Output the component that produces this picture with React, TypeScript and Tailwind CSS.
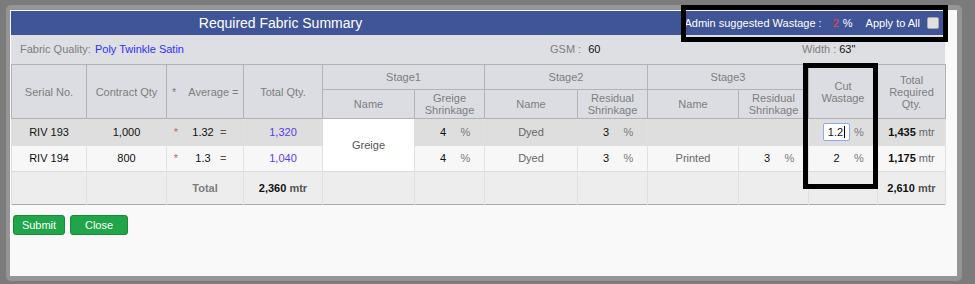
import React from "react";

const th = "border border-[#b3b3b3] bg-[#dcdde2] text-[#7d7d7d] font-normal text-center align-middle leading-[12px] p-0";
const td = "border-x border-[#e0e0e0] text-center align-middle p-0";

type pctProps = {
  value: string;
  focus?: boolean;
};
function Pct({ value, focus }: pctProps) {
  return (
    <div className="flex items-center justify-center gap-[4px]">
      {focus ? (
        <span className="w-[27px] h-[18px] flex items-center justify-center border border-[#8eaaf0] rounded-[2px] bg-white text-[#111]">
          1.2<span className="w-px h-[12px] bg-black ml-px" />
        </span>
      ) : (
        <span className="w-[27px] text-center text-[#111]">{value}</span>
      )}
      <span className="w-[9px] text-[#7a7a7a]">%</span>
    </div>
  );
}

function Avg({ value }: { value: string }) {
  return (
    <div className="flex items-center pl-[6px]">
      <span className="w-[6px] text-[#b86a6a]">*</span>
      <span className="ml-[10px] w-[28px] text-center text-[#111]">{value}</span>
      <span className="ml-[3px] text-[#555]">=</span>
    </div>
  );
}

function Qty({ value, total }: { value: string; total?: boolean }) {
  return (
    <span>
      <b className="text-[#111]">{value}</b>{" "}
      <span className={total ? "font-bold text-[#555]" : "text-[#666]"}>mtr</span>
    </span>
  );
}

export default function App() {
  return (
    <div className="relative w-[975px] h-[284px] overflow-hidden bg-[#7b7b7b] pt-[5px] pl-[6px] font-['Liberation_Sans',Arial,sans-serif] text-[11px]">
      <div className="w-[956px] h-[276px] rounded-[5px] bg-[#959595] pl-[4px] pr-[5px] py-[5px]">
        <div className="h-full bg-[#f9f9f9] pl-px pt-px pr-[12px]">
          {/* title bar */}
          <div className="flex items-center h-[24px] bg-[#3f5597] text-white">
            <div className="w-[539px] text-center text-[14px]">Required Fabric Summary</div>
            <div className="flex-1 flex items-center justify-end pr-[6px]">
              <span>Admin suggested Wastage :</span>
              <span className="ml-[11px] text-[#ff3a3a]">2</span>
              <span className="ml-[4px]">%</span>
              <span className="ml-[13px]">Apply to All</span>
              <span className="ml-[7px] w-[12px] h-[12px] rounded-[2px] bg-[#e1e1e1] border border-[#a9a9a9]" />
            </div>
          </div>

          {/* info row */}
          <div className="flex items-center h-[29px] bg-[#dddfe3]">
            <div className="w-[539px] pl-[9px]">
              <span className="text-[#7d7d7d]">Fabric Quality:</span>
              <span className="ml-[4px] text-[#3030ff]">Poly Twinkle Satin</span>
            </div>
            <div className="w-[252px]">
              <span className="text-[#7d7d7d]">GSM :</span>
              <span className="ml-[7px] text-[#111]">60</span>
            </div>
            <div>
              <span className="text-[#7d7d7d]">Width :</span>
              <span className="ml-[3px] text-[#111]">63"</span>
            </div>
          </div>

          {/* summary table */}
          <table className="w-[934px] table-fixed border-collapse border border-[#a8a8a8]">
            <colgroup>
              <col className="w-[75px]" />
              <col className="w-[80px]" />
              <col className="w-[77px]" />
              <col className="w-[79px]" />
              <col className="w-[92px]" />
              <col className="w-[70px]" />
              <col className="w-[93px]" />
              <col className="w-[70px]" />
              <col className="w-[91px]" />
              <col className="w-[70px]" />
              <col className="w-[69px]" />
              <col className="w-[68px]" />
            </colgroup>
            <thead>
              <tr className="h-[25px]">
                <th rowSpan={2} className={th}>Serial No.</th>
                <th rowSpan={2} className={th}>Contract Qty</th>
                <th rowSpan={2} className={th + " text-left"}>
                  <span className="pl-[5px]">*</span>
                  <span className="ml-[12px]">Average =</span>
                </th>
                <th rowSpan={2} className={th}>Total Qty.</th>
                <th colSpan={2} className={th}>Stage1</th>
                <th colSpan={2} className={th}>Stage2</th>
                <th colSpan={2} className={th}>Stage3</th>
                <th rowSpan={2} className={th}>Cut<br />Wastage</th>
                <th rowSpan={2} className={th}>Total<br />Required<br />Qty.</th>
              </tr>
              <tr className="h-[29px]">
                <th className={th}>Name</th>
                <th className={th}>Greige<br />Shrinkage</th>
                <th className={th}>Name</th>
                <th className={th}>Residual<br />Shrinkage</th>
                <th className={th}>Name</th>
                <th className={th}>Residual<br />Shrinkage</th>
              </tr>
            </thead>
            <tbody className="text-[#111]">
              <tr className="h-[27px] bg-[#dedede] border-t border-[#b3b3b3]">
                <td className={td}>RIV 193</td>
                <td className={td}>1,000</td>
                <td className={td}><Avg value="1.32" /></td>
                <td className={td + " text-[#5a3df5]"}>1,320</td>
                <td rowSpan={2} className={td + " bg-white text-[#555]"}>Greige</td>
                <td className={td}><Pct value="4" /></td>
                <td className={td + " text-[#666]"}>Dyed</td>
                <td className={td}><Pct value="3" /></td>
                <td className={td}></td>
                <td className={td}></td>
                <td className={td}><Pct value="1.2" focus /></td>
                <td className={td}><Qty value="1,435" /></td>
              </tr>
              <tr className="h-[26px] bg-[#f7f7f7]">
                <td className={td}>RIV 194</td>
                <td className={td}>800</td>
                <td className={td}><Avg value="1.3" /></td>
                <td className={td + " text-[#5a3df5]"}>1,040</td>
                <td className={td}><Pct value="4" /></td>
                <td className={td + " text-[#666]"}>Dyed</td>
                <td className={td}><Pct value="3" /></td>
                <td className={td + " text-[#666]"}>Printed</td>
                <td className={td}><Pct value="3" /></td>
                <td className={td}><Pct value="2" /></td>
                <td className={td}><Qty value="1,175" /></td>
              </tr>
              <tr className="h-[33px] bg-[#eeeded] border-t border-[#dadada]">
                <td className={td}></td>
                <td className={td}></td>
                <td className={td + " font-bold text-[#7d7d7d]"}>Total</td>
                <td className={td}><Qty value="2,360" total /></td>
                <td className={td}></td>
                <td className={td}></td>
                <td className={td}></td>
                <td className={td}></td>
                <td className={td}></td>
                <td className={td}></td>
                <td className={td}></td>
                <td className={td}><Qty value="2,610" total /></td>
              </tr>
            </tbody>
          </table>

          <div className="flex gap-[5px] mt-[10px] ml-[2px]">
            <button className="w-[52px] h-[20px] rounded-[3px] border border-[#178a3b] bg-[#21a54b] text-white text-[11px]">Submit</button>
            <button className="w-[58px] h-[20px] rounded-[3px] border border-[#178a3b] bg-[#21a54b] text-white text-[11px]">Close</button>
          </div>
        </div>
      </div>

      {/* annotation boxes */}
      <div className="absolute left-[681px] top-[5px] w-[267px] h-[37px] border-[5px] border-black" />
      <div className="absolute left-[803px] top-[63px] w-[75px] h-[126px] border-[5px] border-black" />
    </div>
  );
}
